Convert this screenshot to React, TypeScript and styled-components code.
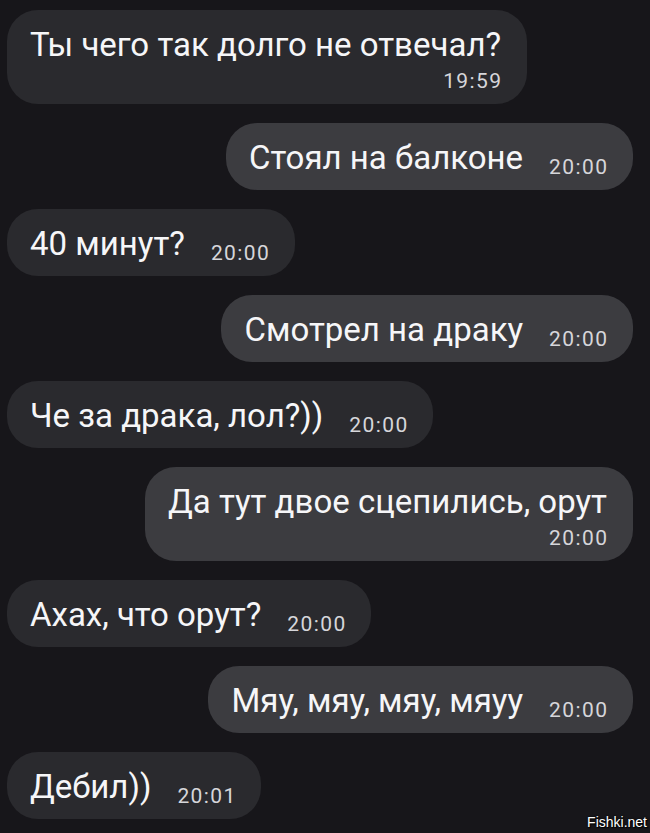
import styled, { createGlobalStyle } from 'styled-components';

type Message = {
  text: string;
  time: string;
  mine: boolean;
  stacked?: boolean;
};

const messages: Message[] = [
  { text: 'Ты чего так долго не отвечал?', time: '19:59', mine: false, stacked: true },
  { text: 'Стоял на балконе', time: '20:00', mine: true },
  { text: '40 минут?', time: '20:00', mine: false },
  { text: 'Смотрел на драку', time: '20:00', mine: true },
  { text: 'Че за драка, лол?))', time: '20:00', mine: false },
  { text: 'Да тут двое сцепились, орут', time: '20:00', mine: true, stacked: true },
  { text: 'Ахах, что орут?', time: '20:00', mine: false },
  { text: 'Мяу, мяу, мяу, мяуу', time: '20:00', mine: true },
  { text: 'Дебил))', time: '20:01', mine: false },
];

const GlobalStyle = createGlobalStyle`
  html, body {
    margin: 0;
    padding: 0;
    background: #17161a;
  }
  body {
    font-family: Roboto, "Liberation Sans", sans-serif;
  }
`;

const Screen = styled.div`
  position: relative;
  width: 650px;
  height: 833px;
  background: #17161a;
  box-sizing: border-box;
  padding: 10px 17px 0 7px;
  display: flex;
  flex-direction: column;
  gap: 19px;
  overflow: hidden;
`;

const Bubble = styled.div<{ $mine: boolean; $stacked?: boolean }>`
  align-self: ${(p) => (p.$mine ? 'flex-end' : 'flex-start')};
  background: ${(p) => (p.$mine ? '#3c3c40' : '#2a2a2e')};
  color: #f6f6f8;
  border-radius: 31px;
  box-sizing: border-box;
  display: flex;
  flex-direction: ${(p) => (p.$stacked ? 'column' : 'row')};
  align-items: flex-end;
  gap: ${(p) => (p.$stacked ? '7px' : '26px')};
  padding: 16px 26px 13px 23px;
`;

const Text = styled.span<{ $stacked?: boolean }>`
  align-self: ${(p) => (p.$stacked ? 'flex-start' : 'auto')};
  font-size: 33px;
  line-height: 38px;
  white-space: nowrap;
`;

const Time = styled.span`
  font-size: 21px;
  line-height: 20px;
  letter-spacing: 1.4px;
  margin-right: -1.4px;
  color: #d6d6da;
  white-space: nowrap;
`;

const Watermark = styled.div`
  position: absolute;
  right: 3px;
  bottom: 3px;
  font-family: "Liberation Sans", Arial, sans-serif;
  font-size: 14px;
  color: #ffffff;
  text-shadow: 0 0 2px #000, 1px 1px 1px #000;
`;

export default function App() {
  return (
    <>
      <GlobalStyle />
      <Screen>
        {messages.map((m, i) => (
          <Bubble key={i} $mine={m.mine} $stacked={m.stacked}>
            <Text $stacked={m.stacked}>{m.text}</Text>
            <Time>{m.time}</Time>
          </Bubble>
        ))}
        <Watermark>Fishki.net</Watermark>
      </Screen>
    </>
  );
}
